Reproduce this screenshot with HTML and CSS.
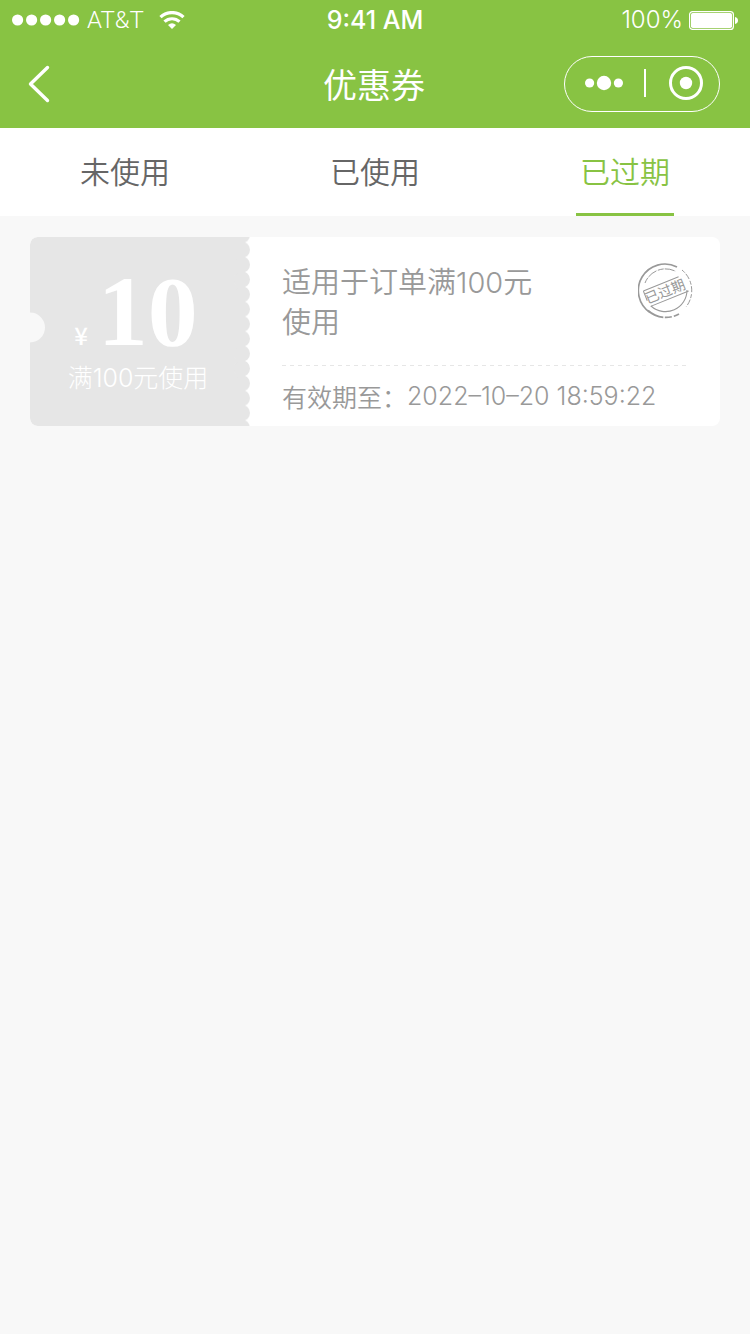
FILE: index.html
```html
<!DOCTYPE html>
<html lang="zh-CN">
<head>
<meta charset="utf-8">
<meta name="viewport" content="width=device-width, initial-scale=1">
<title>优惠券</title>
<link rel="stylesheet" href="styles.css">
</head>
<body>
<header class="header">
  <div class="status">
    <div class="status-left">
      <svg class="signal" width="68" height="12" viewBox="0 0 68 12" fill="#fff" aria-hidden="true"><circle cx="5.6" cy="6" r="5.6"/><circle cx="19.6" cy="6" r="5.6"/><circle cx="33.6" cy="6" r="5.6"/><circle cx="47.6" cy="6" r="5.6"/><circle cx="61.6" cy="6" r="5.6"/></svg>
      <span class="carrier">AT&amp;T</span>
      <svg class="wifi" width="26" height="18" viewBox="0 0 26 18" fill="none" stroke="#fff" stroke-width="3.2" aria-hidden="true"><path d="M1.500 6.200a16.500 16.500 0 0 1 23 0"/><path d="M5.500 10.700a11 11 0 0 1 15 0"/><path d="M13 18l-4-4.1q4-3.1 8 0z" fill="#fff" stroke="none"/></svg>
    </div>
    <span class="time">9:41 AM</span>
    <div class="status-right">
      <span>100%</span>
      <svg width="49" height="19" viewBox="0 0 49 19" aria-hidden="true"><rect x=".6" y=".6" width="43.8" height="17.8" rx="3" fill="none" stroke="#fff" stroke-width="1.2"/><rect x="2" y="2" width="41" height="15" rx="1.8" fill="#fff"/><path d="M46 6q3 .6 3 3.5T46 13z" fill="#fff"/></svg>
    </div>
  </div>
  <div class="nav">
    <button class="back" type="button" aria-label="返回"><svg width="22" height="38" viewBox="0 0 22 38" fill="none" stroke="#fff" stroke-width="3.4" stroke-linecap="round" stroke-linejoin="round"><path d="M19.5 2.500L2.500 19l17 16.500"/></svg></button>
    <h1 class="title">优惠券</h1>
    <div class="capsule">
      <button class="capsule-btn" type="button" aria-label="更多"><svg width="38" height="16" viewBox="0 0 38 16" fill="#fff"><circle cx="4.600" cy="8" r="4.600"/><circle cx="19" cy="8" r="7.200"/><circle cx="33.400" cy="8" r="4.600"/></svg></button>
      <span class="divider"></span>
      <button class="capsule-btn" type="button" aria-label="关闭"><svg width="34" height="34" viewBox="0 0 34 34"><circle cx="17" cy="17" r="15.500" fill="none" stroke="#fff" stroke-width="3"/><circle cx="17" cy="17" r="6.200" fill="#fff"/></svg></button>
    </div>
  </div>
</header>
<nav class="tabs">
  <button class="tab" type="button"><span class="tab-label">未使用</span></button>
  <button class="tab" type="button"><span class="tab-label">已使用</span></button>
  <button class="tab active" type="button"><span class="tab-label">已过期</span></button>
</nav>
<main class="list">
  <article class="coupon">
    <div class="value">
      <svg class="ticket" viewBox="0 0 220 189" preserveAspectRatio="none" aria-hidden="true">
        <defs><pattern id="scallop" x="0" y="5.400" width="220" height="14.830" patternUnits="userSpaceOnUse"><circle cx="212" cy="7.415" r="8" fill="#e6e6e6"/></pattern></defs>
        <path fill="#e6e6e6" d="M7 0H214V189H7a7 7 0 0 1-7-7V105a15 15 0 0 0 0-29V7a7 7 0 0 1 7-7z"/>
        <rect x="204" width="16" height="189" fill="url(#scallop)"/>
        <path fill="#f8f8f8" d="M0 75.500a15 15 0 0 1 0 30z"/>
      </svg>
      <div class="amount"><span class="yen">¥</span><span class="number">10</span></div>
      <div class="condition">满100元使用</div>
    </div>
    <div class="detail">
      <div class="summary">
        <h2 class="name">适用于订单满100元使用</h2>
        <svg class="stamp" width="56" height="56" viewBox="0 0 56 56" fill="none" stroke="#999" role="img" aria-label="已过期">
          <path stroke-width="1.700" d="M39 4A26.500 26.500 0 0 0 12 49.500"/>
          <path stroke-width="1.700" stroke-dasharray="17 1.500 7 2" d="M10 47.500A26.500 26.500 0 0 0 41 51"/>
          <path stroke-width="1" stroke-dasharray="4 1.500 6 2" d="M44 7A26.500 26.500 0 0 1 48 44"/>
          <path stroke-width="1" stroke-dasharray="6 1 10 1.500" d="M7 20A22 22 0 0 1 38 8.500"/>
          <path stroke-width="1.100" d="M13 43A21.500 21.500 0 0 0 49 27"/>
          <g transform="rotate(-22 28 28)" stroke-width="1"><path d="M7 19.500H45M8 36.500H49M7 19.500V30"/><text class="stamp-text" x="27" y="33" text-anchor="middle">已过期</text></g>
        </svg>
      </div>
      <svg class="rule" width="100%" height="1" aria-hidden="true"><line x1="0" y1=".5" x2="100%" y2=".5" stroke="#e6e6e6" stroke-dasharray="4 4"/></svg>
      <p class="expiry"><span>有效期至：</span><time class="digits" datetime="2022-10-20T18:59:22">2022–10–20 18:59:22</time></p>
    </div>
  </article>
</main>
</body>
</html>
```

FILE: styles.css
```css
* { box-sizing: border-box; }
body {
  margin: 0;
  min-height: 100vh;
  background: #f8f8f8;
  color: #666;
  font-family: "Noto Sans CJK SC", sans-serif;
}
button {
  padding: 0;
  border: 0;
  background: none;
  color: inherit;
  font: inherit;
  cursor: pointer;
}
svg { display: block; flex: none; }
h1, h2, p { margin: 0; }
.header { background: #88c343; color: #fff; }
.status {
  display: grid;
  grid-template-columns: 1fr auto 1fr;
  align-items: center;
  height: 40px;
  padding: 0 12px;
  font: 350 24px/40px Inter, sans-serif;
}
.status-left, .status-right { display: flex; align-items: center; }
.status-left { gap: 7px; }
.carrier { font-family: Roboto, Inter, sans-serif; }
.wifi { margin-left: 8px; }
.status-right { justify-content: flex-end; gap: 6px; }
.time { font-size: 25px; font-weight: 500; }
.nav {
  display: grid;
  grid-template-columns: 1fr auto 1fr;
  align-items: center;
  height: 88px;
  padding: 0 30px 0 28px;
}
.back { justify-self: start; }
.title { font-size: 34px; line-height: 48px; font-weight: 400; }
.capsule {
  justify-self: end;
  display: flex;
  align-items: center;
  justify-content: space-between;
  width: 156px;
  height: 56px;
  padding: 0 16px 2px 20px;
  border: 1px solid #fff;
  border-radius: 28px;
}
.divider { width: 2px; height: 28px; margin-left: -2px; background: #fff; }
.tabs {
  display: grid;
  grid-template-columns: repeat(3, 1fr);
  height: 88px;
  background: #fff;
}
.tab {
  display: flex;
  justify-content: center;
  font-size: 30px;
  font-weight: 350;
  line-height: 82px;
}
.tab-label { height: 88px; padding: 1px 4px 0; border-bottom: 3px solid transparent; }
.active { color: #88c343; }
.active .tab-label { border-color: #88c343; }
.list { padding: 21px 30px; }
.coupon {
  display: grid;
  grid-template-columns: 220px 1fr;
  border-radius: 8px;
  background: #fff;
  overflow: hidden;
}
.value {
  position: relative;
  display: flex;
  flex-direction: column;
  align-items: center;
  padding: 25px 4px 0 0;
  color: #fff;
}
.ticket { position: absolute; inset: 0; width: 100%; height: 100%; }
.amount, .condition { position: relative; }
.amount { display: flex; align-items: baseline; height: 98px; gap: 10px; margin-right: 4px; }
.yen { font-size: 24px; line-height: 24px; font-weight: 500; }
.number { font: 700 100px/100px "Liberation Serif", serif; }
.condition { font-family: Inter, "Noto Sans CJK SC", sans-serif; font-size: 25px; line-height: 36px; font-weight: 300; }
.digits { font-family: Inter, sans-serif; }
.detail { padding: 26px 32px 12px; color: #999; }
.summary { display: flex; justify-content: space-between; min-height: 102px; margin-right: -6px; }
.name { max-width: 260px; font-family: Inter, "Noto Sans CJK SC", sans-serif; font-size: 29px; line-height: 40px; font-weight: 350; }
.stamp-text { font-family: "Noto Sans CJK SC", sans-serif; font-size: 14px; fill: #999; stroke: none; }
.expiry { display: flex; padding-top: 12px; font-size: 25px; line-height: 36px; font-weight: 350; }
```
